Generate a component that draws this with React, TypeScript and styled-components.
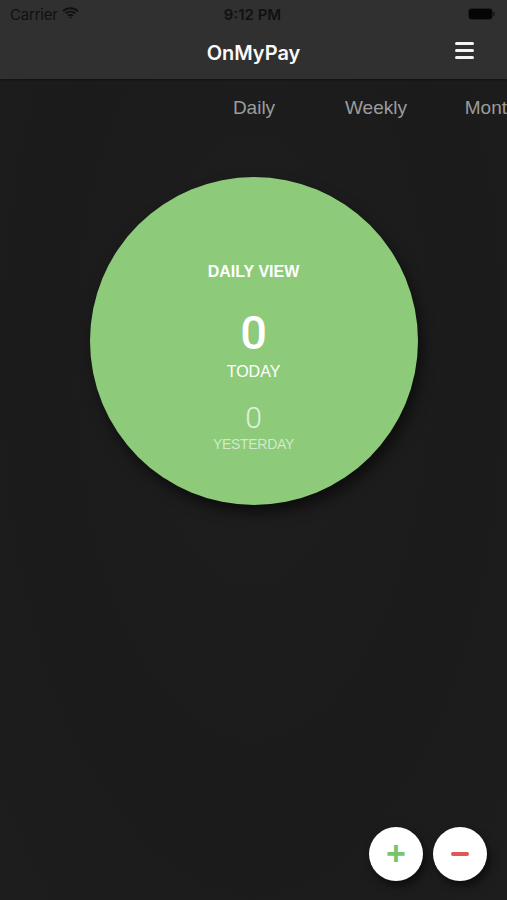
import React from 'react';
import styled, { createGlobalStyle } from 'styled-components';

const GlobalStyle = createGlobalStyle`
  html, body {
    margin: 0;
    padding: 0;
    background: #1c1c1c;
  }
  * {
    box-sizing: border-box;
  }
`;

const tabs = ['Daily', 'Weekly', 'Monthly'];

function App() {
    return (
        <Page>
            <GlobalStyle/>
            <Header>
                <StatusBar>
                    <Carrier>
                        Carrier
                        <svg width="17" height="12" viewBox="0 0 17 12">
                            <path d="M8.5 2.2c2.6 0 5 1 6.8 2.7l1.3-1.4C14.4 1.4 11.6.3 8.5.3S2.6 1.4.4 3.5l1.3 1.4C3.5 3.2 5.9 2.2 8.5 2.2z" fill="#111"/>
                            <path d="M8.5 5.6c1.6 0 3.1.6 4.2 1.6l1.3-1.4C12.5 4.5 10.6 3.7 8.5 3.7S4.5 4.5 3 5.8l1.3 1.4c1.1-1 2.6-1.6 4.2-1.6z" fill="#111"/>
                            <path d="M8.5 8.9c.7 0 1.3.3 1.8.7l1.4-1.4c-.9-.8-2-1.3-3.2-1.3s-2.3.5-3.2 1.3l1.4 1.4c.5-.4 1.1-.7 1.8-.7zM8.5 11.7l1.3-1.3c-.4-.3-.8-.5-1.3-.5s-.9.2-1.3.5z" fill="#111"/>
                        </svg>
                    </Carrier>
                    <Clock>9:12 PM</Clock>
                    <Battery>
                        <BatteryBody/>
                        <BatteryTip/>
                    </Battery>
                </StatusBar>
                <NavBar>
                    <Title>OnMyPay</Title>
                    <Menu>
                        <MenuLine/>
                        <MenuLine/>
                        <MenuLine/>
                    </Menu>
                </NavBar>
            </Header>
            <Tabs>
                {tabs.map(t => (
                    <Tab key={t}>{t}</Tab>
                ))}
            </Tabs>
            <Main>
                <Circle>
                    <ViewLabel>DAILY VIEW</ViewLabel>
                    <BigValue>0</BigValue>
                    <BigLabel>TODAY</BigLabel>
                    <SmallValue>0</SmallValue>
                    <SmallLabel>YESTERDAY</SmallLabel>
                </Circle>
            </Main>
            <Actions>
                <RoundButton color="#78c46c">+</RoundButton>
                <RoundButton color="#e0575a">
                    <Minus/>
                </RoundButton>
            </Actions>
        </Page>
    );
}

const Page = styled.div`
  width: 507px;
  height: 900px;
  display: flex;
  flex-direction: column;
  overflow: hidden;
  background: radial-gradient(ellipse at 50% 40%, #1e1e1e 0%, #1b1b1b 60%, #1d1d1d 100%);
  font-family: "Liberation Sans", Arial, sans-serif;
`;
const Header = styled.div`
  background: #303030;
  height: 79px;
  box-shadow: 0 1px 2px rgba(0, 0, 0, 0.4);
`;
const StatusBar = styled.div`
  height: 28px;
  display: flex;
  align-items: center;
  justify-content: space-between;
  padding: 0 12px 0 10px;
  font-family: Inter, "Liberation Sans", sans-serif;
  color: #111;
  font-size: 15px;
`;
const Carrier = styled.div`
  display: flex;
  align-items: center;
  gap: 4px;
  width: 100px;
  letter-spacing: -0.2px;
  svg {
    margin-top: -2px;
  }
`;
const Clock = styled.div`
  font-weight: 600;
  font-size: 15px;
`;
const Battery = styled.div`
  width: 100px;
  display: flex;
  justify-content: flex-end;
  align-items: center;
`;
const BatteryBody = styled.div`
  width: 23px;
  height: 10px;
  border-radius: 3px;
  background: #050505;
  box-shadow: 0 0 0 1px rgba(0, 0, 0, 0.35);
`;
const BatteryTip = styled.div`
  width: 2px;
  height: 4px;
  margin-left: 1px;
  border-radius: 0 1px 1px 0;
  background: rgba(0, 0, 0, 0.4);
`;
const NavBar = styled.div`
  height: 51px;
  position: relative;
  display: flex;
  align-items: center;
  justify-content: center;
`;
const Title = styled.div`
  font-family: Inter, "Liberation Sans", sans-serif;
  font-weight: 600;
  font-size: 20px;
  color: #fafafa;
  margin-top: -2px;
`;
const Menu = styled.div`
  position: absolute;
  right: 33px;
  top: 14px;
  width: 19px;
  display: flex;
  flex-direction: column;
  gap: 4px;
`;
const MenuLine = styled.div`
  height: 3px;
  border-radius: 2px;
  background: #f4f4f4;
`;
const Tabs = styled.div`
  height: 58px;
  display: flex;
  align-items: center;
  padding-left: 193px;
  white-space: nowrap;
`;
const Tab = styled.div`
  flex: 0 0 122px;
  text-align: center;
  font-size: 19px;
  color: #9c9c9c;
  margin-top: -1px;
`;
const Main = styled.div`
  flex: 1;
  display: flex;
  justify-content: center;
  padding-top: 40px;
`;
const Circle = styled.div`
  width: 328px;
  height: 328px;
  border-radius: 50%;
  background: #8dcb7b;
  box-shadow: 4px 8px 14px rgba(0, 0, 0, 0.55);
  display: flex;
  flex-direction: column;
  align-items: center;
  padding-top: 85px;
  color: #fff;
`;
const ViewLabel = styled.div`
  font-size: 16px;
  font-weight: 700;
  line-height: 20px;
`;
const BigValue = styled.div`
  font-family: Roboto, "Liberation Sans", sans-serif;
  font-size: 47px;
  font-weight: 500;
  line-height: 52px;
  margin-top: 25px;
`;
const BigLabel = styled.div`
  font-size: 16px;
  line-height: 20px;
  margin-top: 3px;
`;
const SmallValue = styled.div`
  font-family: Roboto, "Liberation Sans", sans-serif;
  font-size: 30px;
  font-weight: 300;
  line-height: 32px;
  margin-top: 20px;
  color: rgba(255, 255, 255, 0.75);
`;
const SmallLabel = styled.div`
  font-size: 14px;
  line-height: 16px;
  margin-top: 2px;
  letter-spacing: -0.3px;
  color: rgba(255, 255, 255, 0.6);
`;
const Actions = styled.div`
  display: flex;
  justify-content: flex-end;
  gap: 10px;
  padding: 0 20px 19px 0;
`;
const RoundButton = styled.div<{ color: string }>`
  width: 54px;
  height: 54px;
  border-radius: 50%;
  background: #fff;
  box-shadow: 3px 5px 8px rgba(0, 0, 0, 0.55);
  display: flex;
  align-items: center;
  justify-content: center;
  color: ${p => p.color};
  font-size: 34px;
  font-weight: 700;
  line-height: 1;
  padding-bottom: 3px;
`;
const Minus = styled.div`
  width: 18px;
  height: 4px;
  border-radius: 2px;
  background: currentColor;
  margin-top: 3px;
`;

export default App;
